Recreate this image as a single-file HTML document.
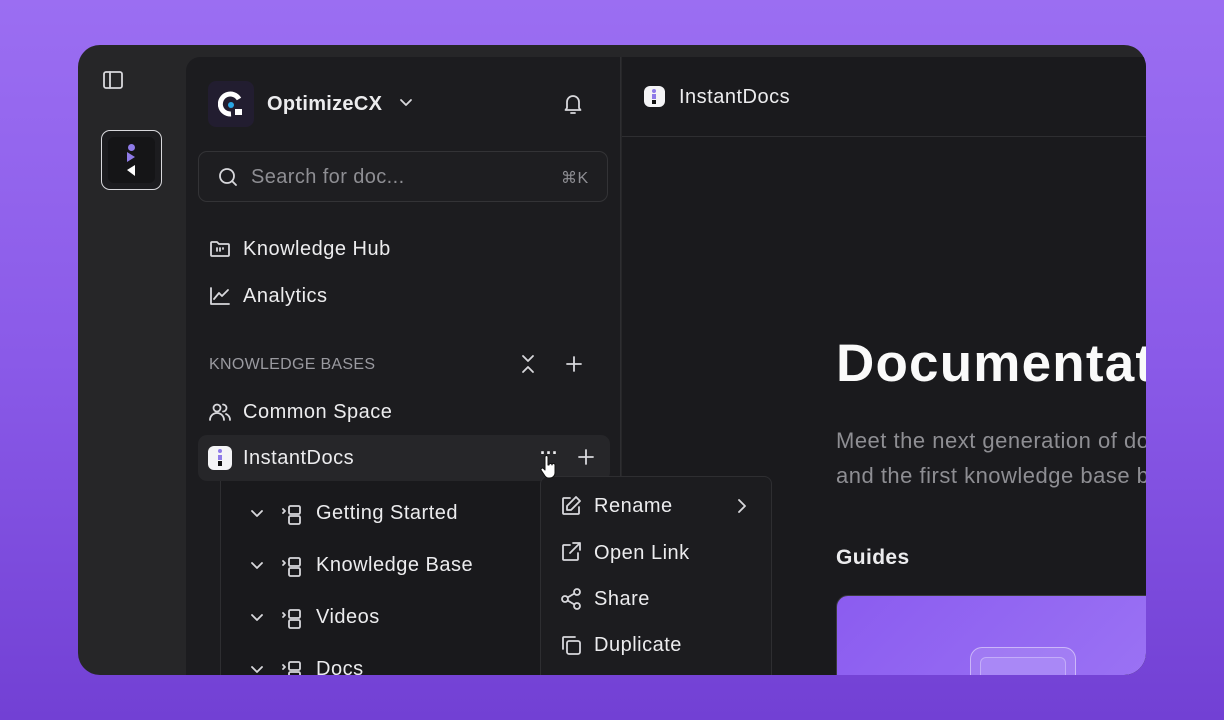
<!DOCTYPE html>
<html><head><meta charset="utf-8"><style>
*{margin:0;padding:0;box-sizing:border-box}
body{width:1224px;height:720px;overflow:hidden;font-family:"Liberation Sans",sans-serif;background:linear-gradient(180deg,#9b6ef2 0%,#8a5ae8 50%,#7240d4 100%);position:relative}
.win{position:absolute;left:78px;top:45px;width:1068px;height:630px;border-radius:22px;background:#262628;overflow:hidden}
.side{position:absolute;left:108px;top:12px;width:435px;height:630px;background:#1c1c1f;border-top-left-radius:14px;border-right:1px solid #2e2e31}
.main{position:absolute;left:544px;top:12px;width:600px;height:630px;background:#1a1a1d}
.t{position:absolute;color:#ececee;font-size:20px;white-space:nowrap;letter-spacing:0.5px;margin-top:1px}
svg{position:absolute;fill:none;stroke:#d8d8dc;stroke-width:1.8;stroke-linecap:round;stroke-linejoin:round}
</style></head><body>
<div class="win">
<svg style="left:24px;top:25px" width="22" height="20" viewBox="0 0 22 20"><rect x="2" y="2" width="18" height="16" rx="2"/><line x1="8" y1="2" x2="8" y2="18"/></svg>
<div style="position:absolute;left:23px;top:85px;width:61px;height:60px;border:1.5px solid #d8d8dc;border-radius:9px;background:#1c1c1f"></div>
<div style="position:absolute;left:30px;top:92px;width:47px;height:46px;border-radius:6px;background:#151517"></div>
<div style="position:absolute;left:50px;top:99px;width:7px;height:7px;border-radius:50%;background:#8f7be8"></div>
<svg style="left:47px;top:107px;stroke:none" width="12" height="26" viewBox="0 0 12 26"><path d="M2 0 L10 5 L2 10Z" fill="#8f7be8"/><path d="M10 13 L2 18 L10 24Z" fill="#fff"/></svg>

<div class="side">
<div style="position:absolute;left:22px;top:24px;width:46px;height:46px;border-radius:8px;background:#221d30"></div>
<svg style="left:32px;top:34px" width="26" height="26" viewBox="0 0 26 26"><path d="M21 8 A10 10 0 1 0 13 23" stroke="#fff" stroke-width="5" stroke-linecap="butt"/><circle cx="13" cy="14" r="3" fill="#2aa7e6" stroke="none"/><rect x="17" y="18" width="7" height="6" fill="#fff" stroke="none"/></svg>
<div class="t" style="left:81px;top:35px;font-weight:bold;font-size:20px;letter-spacing:0.3px">OptimizeCX</div>
<svg style="left:212px;top:40px" width="16" height="12" viewBox="0 0 16 12"><path d="M3 3 L8 8 L13 3"/></svg>
<svg style="left:375px;top:35px" width="24" height="24" viewBox="0 0 24 24"><path d="M6 16 V10 a6 6 0 0 1 12 0 V16 L19.5 18 H4.5Z"/><path d="M10 21 h4"/></svg>
<div style="position:absolute;left:12px;top:94px;width:410px;height:51px;border:1px solid #333336;border-radius:9px;background:#1e1e21"></div>
<svg style="left:30px;top:108px" width="24" height="24" viewBox="0 0 24 24"><circle cx="11" cy="11" r="7"/><path d="M16 16 L20 20"/></svg>
<div class="t" style="left:65px;top:108px;color:#8e8e93;font-size:20px;letter-spacing:0.4px">Search for doc...</div>
<div class="t" style="left:375px;top:110px;color:#8e8e93;font-size:16px">⌘K</div>
<svg style="left:22px;top:180px" width="24" height="24" viewBox="0 0 24 24"><path d="M3 6 a1 1 0 0 1 1-1 h5 l2 2 h9 a1 1 0 0 1 1 1 v10 a1 1 0 0 1-1 1 H4 a1 1 0 0 1-1-1Z"/><path d="M9 11v3M12 11v3M15 11v1"/></svg>
<div class="t" style="left:57px;top:180px">Knowledge Hub</div>
<svg style="left:22px;top:227px" width="24" height="24" viewBox="0 0 24 24"><path d="M3 4 V20 H21"/><path d="M6 15 L11 9 L14 12 L20 6"/></svg>
<div class="t" style="left:57px;top:227px">Analytics</div>
<div class="t" style="left:23px;top:298px;color:#9a9aa0;font-size:16px;letter-spacing:0.3px">KNOWLEDGE BASES</div>
<svg style="left:332px;top:296px" width="20" height="22" viewBox="0 0 20 22"><path d="M5 3 L10 8 L15 3M5 19 L10 14 L15 19"/></svg>
<svg style="left:378px;top:297px" width="20" height="20" viewBox="0 0 20 20"><path d="M10 3v14M3 10h14"/></svg>
<svg style="left:22px;top:343px" width="24" height="24" viewBox="0 0 24 24"><circle cx="9" cy="8" r="3.5"/><path d="M2 20 a7 7 0 0 1 14 0"/><path d="M15 4.5 a3.5 3.5 0 0 1 0 7M18 14 a6 6 0 0 1 4 6"/></svg>
<div class="t" style="left:57px;top:343px">Common Space</div>
<div style="position:absolute;left:12px;top:378px;width:412px;height:46px;border-radius:9px;background:#262629"></div>
<div style="position:absolute;left:22px;top:389px;width:24px;height:24px;border-radius:6px;background:#f4f4f6"></div>
<div style="position:absolute;left:32px;top:392px;width:4px;height:4px;border-radius:50%;background:#8f7be8"></div>
<div style="position:absolute;left:32px;top:398px;width:4px;height:5px;background:#8f7be8"></div>
<div style="position:absolute;left:32px;top:404px;width:4px;height:5px;background:#111"></div>
<div class="t" style="left:57px;top:389px;font-weight:500">InstantDocs</div>
<div class="t" style="left:354px;top:385px;font-size:18px;font-weight:bold;letter-spacing:0">···</div>
<svg style="left:390px;top:390px" width="20" height="20" viewBox="0 0 20 20"><path d="M10 3v14M3 10h14"/></svg>
<div style="position:absolute;left:34px;top:424px;width:1px;height:206px;background:#2e2e31"></div>
<div style="position:absolute;left:35px;top:424px;width:400px;height:206px;background:#19191c"></div>
<svg style="left:62px;top:448px" width="18" height="18" viewBox="0 0 18 18"><path d="M4 6 L9 11 L14 6"/></svg>
<svg style="left:94px;top:446px" width="24" height="24" viewBox="0 0 24 24"><path d="M3 6 L5 8 L3 10"/><rect x="9" y="3" width="11" height="8" rx="1.5"/><rect x="9" y="13" width="11" height="8" rx="1.5"/></svg>
<div class="t" style="left:130px;top:444px">Getting Started</div>
<svg style="left:62px;top:500px" width="18" height="18" viewBox="0 0 18 18"><path d="M4 6 L9 11 L14 6"/></svg>
<svg style="left:94px;top:498px" width="24" height="24" viewBox="0 0 24 24"><path d="M3 6 L5 8 L3 10"/><rect x="9" y="3" width="11" height="8" rx="1.5"/><rect x="9" y="13" width="11" height="8" rx="1.5"/></svg>
<div class="t" style="left:130px;top:496px">Knowledge Base</div>
<svg style="left:62px;top:552px" width="18" height="18" viewBox="0 0 18 18"><path d="M4 6 L9 11 L14 6"/></svg>
<svg style="left:94px;top:550px" width="24" height="24" viewBox="0 0 24 24"><path d="M3 6 L5 8 L3 10"/><rect x="9" y="3" width="11" height="8" rx="1.5"/><rect x="9" y="13" width="11" height="8" rx="1.5"/></svg>
<div class="t" style="left:130px;top:548px">Videos</div>
<svg style="left:62px;top:604px" width="18" height="18" viewBox="0 0 18 18"><path d="M4 6 L9 11 L14 6"/></svg>
<svg style="left:94px;top:602px" width="24" height="24" viewBox="0 0 24 24"><path d="M3 6 L5 8 L3 10"/><rect x="9" y="3" width="11" height="8" rx="1.5"/><rect x="9" y="13" width="11" height="8" rx="1.5"/></svg>
<div class="t" style="left:130px;top:600px">Docs</div>
</div>

<div class="main">
<div style="position:absolute;left:0;top:79px;width:600px;height:1px;background:#2e2e31"></div>
<div style="position:absolute;left:22px;top:29px;width:21px;height:21px;border-radius:6px;background:#f4f4f6"></div>
<div style="position:absolute;left:30px;top:32px;width:4px;height:4px;border-radius:50%;background:#8f7be8"></div>
<div style="position:absolute;left:30px;top:37px;width:4px;height:5px;background:#8f7be8"></div>
<div style="position:absolute;left:30px;top:43px;width:4px;height:4px;background:#111"></div>
<div class="t" style="left:57px;top:28px;font-size:20px;letter-spacing:0.5px">InstantDocs</div>
<div class="t" style="left:214px;top:275px;font-size:53px;font-weight:bold;color:#fafafa;letter-spacing:1.2px">Documentation</div>
<div class="t" style="left:214px;top:365px;font-size:22px;color:#8e8e93;line-height:35px;letter-spacing:0.5px">Meet the next generation of documentation<br>and the first knowledge base built for AI</div>
<div class="t" style="left:214px;top:488px;font-size:21px;font-weight:bold;letter-spacing:0.4px">Guides</div>
<div style="position:absolute;left:214px;top:538px;width:420px;height:120px;border-radius:12px;background:linear-gradient(135deg,#8b5cf0,#a07af5);border:1px solid #3a3a3e"></div>
<div style="position:absolute;left:348px;top:590px;width:106px;height:60px;border-radius:12px;border:1.5px solid rgba(255,255,255,.45);background:rgba(255,255,255,.12)"></div>
<div style="position:absolute;left:358px;top:600px;width:86px;height:40px;border-radius:6px;background:#a988f6;border:1px solid rgba(255,255,255,.3)"></div>
</div>

<div style="position:absolute;left:462px;top:431px;width:232px;height:220px;background:#1c1c1f;border:1px solid #2e2e31;border-radius:8px"></div>
<svg style="left:481px;top:449px" width="24" height="24" viewBox="0 0 24 24"><path d="M11 4 H5 a1 1 0 0 0-1 1 v14 a1 1 0 0 0 1 1 h14 a1 1 0 0 0 1-1 v-6"/><path d="M17 3 L21 7 L12 16 H8 V12Z"/></svg>
<div class="t" style="left:516px;top:449px">Rename</div>
<svg style="left:655px;top:451px" width="18" height="20" viewBox="0 0 18 20"><path d="M6 4 L12 10 L6 16"/></svg>
<svg style="left:481px;top:495px" width="24" height="24" viewBox="0 0 24 24"><path d="M11 5 H5 a1 1 0 0 0-1 1 v13 a1 1 0 0 0 1 1 h13 a1 1 0 0 0 1-1 v-6"/><path d="M14 3 H21 V10M21 3 L11 13"/></svg>
<div class="t" style="left:516px;top:496px">Open Link</div>
<svg style="left:481px;top:542px" width="24" height="24" viewBox="0 0 24 24"><circle cx="18" cy="5" r="3"/><circle cx="6" cy="12" r="3"/><circle cx="18" cy="19" r="3"/><path d="M8.6 13.5 L15.4 17.5M15.4 6.5 L8.6 10.5"/></svg>
<div class="t" style="left:516px;top:542px">Share</div>
<svg style="left:481px;top:588px" width="24" height="24" viewBox="0 0 24 24"><rect x="8" y="8" width="13" height="13" rx="2"/><path d="M4 16 V5 a1 1 0 0 1 1-1 h11"/></svg>
<div class="t" style="left:516px;top:588px">Duplicate</div>
<svg style="left:462px;top:410px;stroke:#111;stroke-width:1;fill:#fff" width="18" height="24" viewBox="0 0 18 24"><path d="M5 2 a1.5 1.5 0 0 1 3 0 V10 h1 a1.5 1.5 0 0 1 3 0 a1.5 1.5 0 0 1 3 0 V18 a5 5 0 0 1-5 5 H9 a5 5 0 0 1-4-2 L1 15 a1.5 1.5 0 0 1 2.5-1.5 L5 15Z"/></svg>
</div>
</body></html>
